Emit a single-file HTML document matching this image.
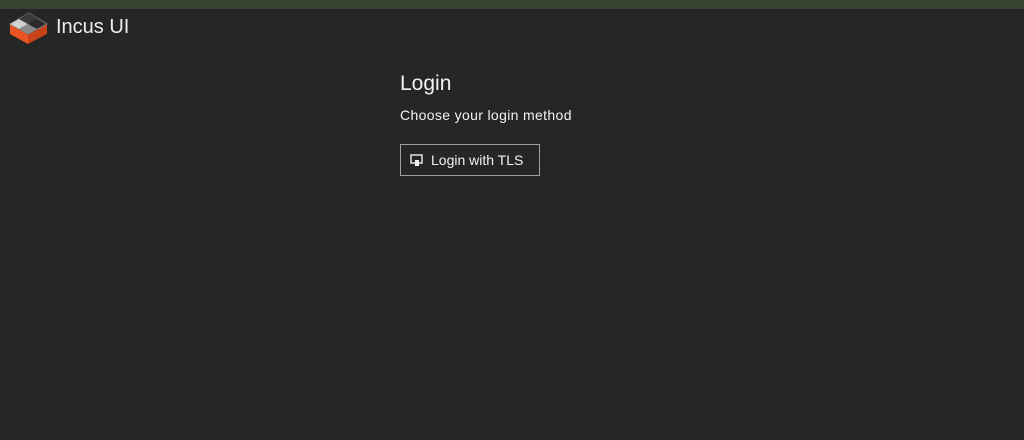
<!DOCTYPE html>
<html><head><style>
body{margin:0;width:1024px;height:440px;background:#262626;font-family:"Liberation Sans",sans-serif;color:#f2f2f2;position:relative;overflow:hidden}
.top{position:absolute;left:0;top:0;width:1024px;height:9px;background:#354330}
.brand{position:absolute;left:56px;top:16px;font-size:20px;color:#eee}
h1{position:absolute;left:400px;top:72px;margin:0;font-weight:300;font-size:21px}
p{position:absolute;left:400px;top:107px;margin:0;font-size:14px;letter-spacing:0.35px}
.btn{position:absolute;left:400px;top:144px;width:138px;height:30px;border:1px solid #a0a0a0;box-sizing:content-box}
.btn span{position:absolute;left:30px;top:7px;font-size:14px}
</style></head><body>
<div class="top"></div>
<svg style="position:absolute;left:9px;top:11px" width="40" height="34" viewBox="0 0 40 34">
<polygon points="1,13 19,23 19,33 1,23" fill="#e95420"/>
<polygon points="19,23 38,13 38,23 19,33" fill="#c8421a"/>
<polygon points="1,13 20,2 38,13 19,23" fill="#2a2a2a" stroke="#777" stroke-width="1"/>
<polygon points="1,13 10,8 19,13 10,18" fill="#d0d0d0"/>
<polygon points="10,18 19,13 28,18 19,23" fill="#8a8a8a"/>
<polygon points="20,2 29,7.5 19,13 10,8" fill="#3a3a3a"/>
</svg>
<div class="brand">Incus UI</div>
<h1>Login</h1>
<p>Choose your login method</p>
<div class="btn">
<svg style="position:absolute;left:9px;top:9px" width="14" height="14" viewBox="0 0 14 14"><rect x="1" y="1" width="11" height="8" fill="none" stroke="#eee" stroke-width="1.4"/><rect x="5" y="6" width="4" height="6" fill="#eee"/></svg>
<span>Login with TLS</span></div>
</body></html>
